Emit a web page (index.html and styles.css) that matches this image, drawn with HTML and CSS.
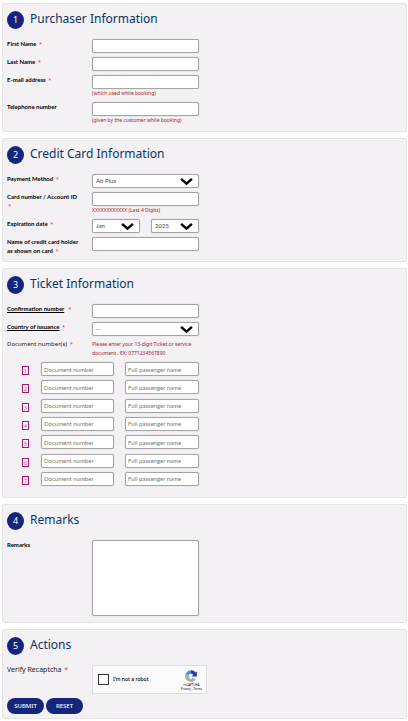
FILE: index.html
```
<!DOCTYPE html>
<html lang="en">
<head>
    <meta charset="UTF-8">
    <title>Purchase Form</title>
    <meta name="viewport" content="width=device-width, initial-scale=1.0">
    <link rel="stylesheet" href="styles.css">
</head>
<body>
    <form class="booking-form">
        <section class="panel">
            <h2><span class="step">1</span>Purchaser Information</h2>
            <div class="row">
                <label for="firstName">First Name <span class="req">*</span></label>
                <div class="field"><input type="text" id="firstName"></div>
            </div>
            <div class="row">
                <label for="lastName">Last Name <span class="req">*</span></label>
                <div class="field"><input type="text" id="lastName"></div>
            </div>
            <div class="row">
                <label for="email">E-mail address <span class="req">*</span></label>
                <div class="field">
                    <input type="email" id="email">
                    <p class="hint">(which used while booking)</p>
                </div>
            </div>
            <div class="row">
                <label for="phone">Telephone number</label>
                <div class="field">
                    <input type="tel" id="phone">
                    <p class="hint">(given by the customer while booking)</p>
                </div>
            </div>
        </section>

        <section class="panel">
            <h2><span class="step">2</span>Credit Card Information</h2>
            <div class="row">
                <label for="payment">Payment Method <span class="req">*</span></label>
                <div class="field">
                    <select id="payment"><option>Air Plus</option></select>
                </div>
            </div>
            <div class="row">
                <label for="cardNumber">Card number / Account ID <br><span class="req">*</span></label>
                <div class="field">
                    <input type="text" id="cardNumber">
                    <p class="hint">XXXXXXXXXXXX (Last 4 Digits)</p>
                </div>
            </div>
            <div class="row">
                <label for="expMonth">Expiration date <span class="req">*</span></label>
                <div class="field split">
                    <select id="expMonth"><option>Jan</option></select>
                    <select id="expYear" aria-label="Expiration year"><option>2025</option></select>
                </div>
            </div>
            <div class="row">
                <label for="holder">Name of credit card holder as shown on card <span class="req">*</span></label>
                <div class="field"><input type="text" id="holder"></div>
            </div>
        </section>

        <section class="panel panel-tickets">
            <h2><span class="step">3</span>Ticket Information</h2>
            <div class="row">
                <label for="confirmation"><u>Confirmation number</u> &nbsp;<span class="req">*</span></label>
                <div class="field"><input type="text" id="confirmation"></div>
            </div>
            <div class="row">
                <label for="country"><u>Country of issuance</u> <span class="req">*</span></label>
                <div class="field">
                    <select id="country"><option>--</option></select>
                </div>
            </div>
            <div class="row">
                <span class="documents-title">Document number(s) <span class="req">*</span></span>
                <p class="hint">Please enter your 13-digit Ticket or service document . EX: 0771234567890</p>
            </div>
            <ol class="documents">
                <li>
                    <span class="num">1</span>
                    <input type="text" placeholder="Document number" aria-label="Document number 1">
                    <input type="text" placeholder="Full passenger name" aria-label="Full passenger name 1">
                </li>
                <li>
                    <span class="num">2</span>
                    <input type="text" placeholder="Document number" aria-label="Document number 2">
                    <input type="text" placeholder="Full passenger name" aria-label="Full passenger name 2">
                </li>
                <li>
                    <span class="num">3</span>
                    <input type="text" placeholder="Document number" aria-label="Document number 3">
                    <input type="text" placeholder="Full passenger name" aria-label="Full passenger name 3">
                </li>
                <li>
                    <span class="num">4</span>
                    <input type="text" placeholder="Document number" aria-label="Document number 4">
                    <input type="text" placeholder="Full passenger name" aria-label="Full passenger name 4">
                </li>
                <li>
                    <span class="num">5</span>
                    <input type="text" placeholder="Document number" aria-label="Document number 5">
                    <input type="text" placeholder="Full passenger name" aria-label="Full passenger name 5">
                </li>
                <li>
                    <span class="num">6</span>
                    <input type="text" placeholder="Document number" aria-label="Document number 6">
                    <input type="text" placeholder="Full passenger name" aria-label="Full passenger name 6">
                </li>
                <li>
                    <span class="num">7</span>
                    <input type="text" placeholder="Document number" aria-label="Document number 7">
                    <input type="text" placeholder="Full passenger name" aria-label="Full passenger name 7">
                </li>
            </ol>
        </section>

        <section class="panel">
            <h2><span class="step">4</span>Remarks</h2>
            <div class="row">
                <label for="remarks">Remarks</label>
                <div class="field"><textarea id="remarks"></textarea></div>
            </div>
        </section>

        <section class="panel panel-actions">
            <h2><span class="step">5</span>Actions</h2>
            <div class="row">
                <label class="label-plain" for="robot">Verify Recaptcha <span class="req">*</span></label>
                <div class="captcha">
                    <input type="checkbox" id="robot">
                    <label for="robot">I'm not a robot</label>
                    <div class="captcha-brand">
                        <svg viewBox="0 0 24 24" width="14" height="14" aria-hidden="true">
                            <path d="M12 2v6a4 4 0 0 0-4 4l-3-3-3 3A10 10 0 0 1 12 2z" fill="#4a90e2"/>
                            <path d="M12 2a10 10 0 0 1 8 4l2-2v9h-9l3-3a4 4 0 0 0-4-2z" fill="#1c3aa9"/>
                            <path d="M2 12l3-3 6 6-3 0a4 4 0 0 0 7 0l5 3A10 10 0 0 1 2 12z" fill="#ababab"/>
                        </svg>
                        <span>reCAPTCHA</span>
                        <span>Privacy - Terms</span>
                    </div>
                </div>
            </div>
            <div class="buttons">
                <button type="submit">SUBMIT</button>
                <button type="reset">RESET</button>
            </div>
        </section>
    </form>
</body>
</html>
```
FILE: styles.css
```
* {
    box-sizing: border-box;
}
body {
    margin: 0;
    background: #fff;
    color: #000;
    font-family: 'Noto Sans', 'Open Sans', sans-serif;
    font-size: 6px;
    line-height: 9px;
}
.booking-form {
    display: flex;
    flex-direction: column;
    gap: 6px;
    padding: 3px 1px 2px 2px;
}
.panel {
    display: flex;
    flex-direction: column;
    gap: 4px;
    padding: 5px 4px 6px;
    background: #f3f1f3;
    border: 1px solid #e4e4e4;
    border-radius: 2px;
}
h2 {
    display: flex;
    align-items: flex-start;
    gap: 6px;
    margin: 0 0 6px;
    color: #0a3468;
    font-size: 12px;
    font-weight: 400;
    line-height: 20px;
}
.step {
    width: 17px;
    height: 18px;
    margin-top: 2px;
    border-radius: 50%;
    background: #15257b;
    color: #fff;
    font-size: 9px;
    line-height: 18px;
    text-align: center;
}
.row {
    display: grid;
    grid-template-columns: 75px minmax(0, 107px);
    column-gap: 10px;
    align-items: start;
}
label {
    font-family: Lato, 'Noto Sans', sans-serif;
    font-weight: 700;
}
.label-plain {
    color: #222;
    font-family: inherit;
    font-size: 7px;
    font-weight: 400;
}
.documents-title {
    color: #222;
}
.req {
    margin-left: 1px;
    color: #f33;
    font-family: 'Noto Sans', sans-serif;
    font-weight: 400;
    line-height: 1;
}
.hint {
    margin: 0;
    color: #a8202f;
    font-size: 5px;
    line-height: 9px;
}
input,
select,
textarea {
    display: block;
    width: 100%;
    min-width: 0;
    height: 14px;
    margin: 0;
    padding: 0 2px;
    border: 1px solid #a5a5a5;
    border-radius: 2px;
    background: #fff;
    box-shadow: 0 0 1px #aaa;
    color: #444;
    font-family: Lato, 'Noto Sans', sans-serif;
    font-size: 6px;
    line-height: 12px;
}
select {
    appearance: none;
    padding: 0 18px 0 3px;
    background: #fff url("data:image/svg+xml,%3Csvg xmlns='http://www.w3.org/2000/svg' viewBox='0 0 12 8'%3E%3Cpath d='M1 1.5L6 6L11 1.5' fill='none' stroke='%23000' stroke-width='2.2'/%3E%3C/svg%3E") no-repeat right 5px center / 13px 9px;
}
textarea {
    height: 76px;
    resize: none;
}
input::placeholder {
    color: #777;
    opacity: 1;
}
.split {
    display: grid;
    grid-template-columns: 1fr 1fr;
    gap: 11px;
}

/* Document rows */
.panel-tickets {
    padding-bottom: 11px;
}
.documents {
    display: grid;
    align-content: space-between;
    min-height: 124px;
    margin: 0;
    padding: 0 0 0 15px;
    list-style: none;
}
.documents li {
    display: grid;
    grid-template-columns: 8px minmax(0, 73px) minmax(0, 74px);
    column-gap: 11px;
    align-items: center;
}
.num {
    width: 7px;
    height: 9px;
    margin-top: 3px;
    border: 1px solid #b0136f;
    color: #777;
    font-size: 5px;
    line-height: 8px;
    text-align: center;
}

/* Captcha and buttons */
.panel-actions {
    padding-bottom: 4px;
}
.captcha {
    display: flex;
    align-items: center;
    width: 115px;
    height: 29px;
    padding: 0 4px 0 5px;
    border: 1px solid #ddd;
    background: #fafafa;
}
.captcha input {
    appearance: none;
    flex: none;
    width: 11px;
    height: 11px;
    margin-right: 4px;
    padding: 0;
    border-color: #333;
    border-radius: 0;
    box-shadow: none;
}
.captcha input:checked {
    background: #4a90e2;
}
.captcha label {
    font-family: inherit;
    font-size: 5px;
    font-weight: 500;
}
.captcha-brand {
    display: flex;
    flex-direction: column;
    align-items: center;
    margin-left: auto;
    font-size: 3px;
    line-height: 4px;
}
.buttons {
    display: flex;
    gap: 2px;
}
button {
    min-width: 37px;
    height: 16px;
    padding: 0 7px;
    border: none;
    border-radius: 8px;
    background: #15257b;
    color: #fff;
    font-family: inherit;
    font-size: 6px;
    font-weight: 500;
    cursor: pointer;
}
```
